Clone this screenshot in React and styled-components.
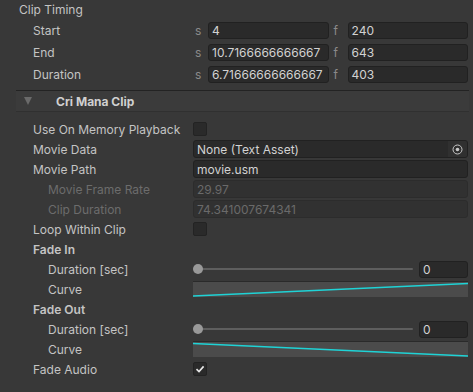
import React from 'react';
import styled, { createGlobalStyle } from 'styled-components';

const GlobalStyle = createGlobalStyle`
  html, body {
    margin: 0;
    padding: 0;
    background: #383838;
  }
  body {
    font-family: Inter, "Noto Sans", "Liberation Sans", sans-serif;
    font-size: 12px;
    color: #c4c4c4;
  }
`;

const Panel = styled.div`
  width: 473px;
  height: 392px;
  background: #383838;
  overflow: hidden;
  display: flex;
  flex-direction: column;
`;

const Title = styled.div`
  height: 19px;
  padding-left: 19px;
  display: flex;
  align-items: center;
`;

const Row = styled.div`
  height: ${(p) => p.h || 20}px;
  display: grid;
  grid-template-columns: 193px 1fr;
  align-items: center;
  padding-right: 5px;
`;

const Label = styled.div`
  padding-left: ${(p) => (p.indent ? 48 : 33)}px;
  font-weight: ${(p) => (p.bold ? 600 : 400)};
  color: ${(p) => (p.disabled ? '#6c6c6c' : '#c4c4c4')};
  white-space: nowrap;
`;

const TimingValue = styled.div`
  display: grid;
  grid-template-columns: 15px 1fr 19px 1fr;
  align-items: center;
`;

const Unit = styled.span`
  color: #8a8a8a;
  padding-left: ${(p) => p.pad || 2}px;
`;

const Field = styled.div`
  height: 17px;
  box-sizing: border-box;
  background: ${(p) => (p.disabled ? '#313131' : '#2a2a2a')};
  border: 1px solid ${(p) => (p.disabled ? '#2c2c2c' : '#212121')};
  border-radius: 3px;
  padding: 0 3px;
  display: flex;
  align-items: center;
  color: ${(p) => (p.disabled ? '#6a6a6a' : '#d2d2d2')};
  white-space: nowrap;
  overflow: hidden;
`;

const ObjectField = styled(Field)`
  height: 18px;
  padding-right: 0;
  justify-content: space-between;
`;

const Picker = styled.div`
  width: 19px;
  height: 100%;
  background: #303030;
  display: flex;
  align-items: center;
  justify-content: center;
`;

const Separator = styled.div`
  height: 5px;
`;

const Header = styled.div`
  margin-left: 16px;
  margin-right: 4px;
  height: 20px;
  border-top: 1px solid #232323;
  border-bottom: 1px solid #303030;
  background: #3b3b3b;
  display: flex;
  align-items: center;
  font-weight: 700;
  color: #d0d0d0;
`;

const Arrow = styled.span`
  width: 0;
  height: 0;
  margin-left: 8px;
  margin-right: 24px;
  border-left: 4.5px solid transparent;
  border-right: 4.5px solid transparent;
  border-top: 8px solid #6a6a6a;
`;

const Gap = styled.div`
  height: 7px;
`;

const Check = styled.div`
  width: 14px;
  height: 14px;
  box-sizing: border-box;
  background: #2a2a2a;
  border: 1px solid #232323;
  border-radius: 2px;
  display: flex;
  align-items: center;
  justify-content: center;
`;

const SliderWrap = styled.div`
  display: grid;
  grid-template-columns: 1fr 49px;
  gap: 6px;
  align-items: center;
`;

const Track = styled.div`
  position: relative;
  height: 2px;
  background: #5e5e5e;
  border-radius: 1px;
`;

const Thumb = styled.div`
  position: absolute;
  left: 0;
  top: -4px;
  width: 10px;
  height: 10px;
  border-radius: 50%;
  background: #999999;
`;

const CurveBox = styled.div`
  height: 16px;
  box-sizing: border-box;
  background: #4b4b4b;
  border-top: 1px solid #2a2a2a;
  overflow: hidden;

  svg {
    display: block;
  }
`;

const Curve = ({ down }) => (
  <CurveBox>
    <svg width="275" height="15" viewBox="0 0 275 15">
      <line
        x1="0"
        y1={down ? 1.5 : 14}
        x2="275"
        y2={down ? 14 : 1.5}
        stroke="#1fd3d6"
        strokeWidth="1.3"
      />
    </svg>
  </CurveBox>
);

const Tick = () => (
  <svg width="10" height="10" viewBox="0 0 10 10">
    <path d="M1.5 5.2 L4 7.6 L8.6 2.4" fill="none" stroke="#e8e8e8" strokeWidth="1.6" />
  </svg>
);

const PickerIcon = () => (
  <svg width="11" height="11" viewBox="0 0 11 11">
    <circle cx="5.5" cy="5.5" r="4.5" fill="none" stroke="#c8c8c8" strokeWidth="1" />
    <circle cx="5.5" cy="5.5" r="1.8" fill="#c8c8c8" />
  </svg>
);

const timing = [
  ['Start', '4', '240'],
  ['End', '10.7166666666667', '643'],
  ['Duration', '6.71666666666667', '403'],
];

const Fade = ({ title, down }) => (
  <>
    <Row>
      <Label bold>{title}</Label>
    </Row>
    <Row>
      <Label indent>Duration [sec]</Label>
      <SliderWrap>
        <Track>
          <Thumb />
        </Track>
        <Field>0</Field>
      </SliderWrap>
    </Row>
    <Row>
      <Label indent>Curve</Label>
      <Curve down={down} />
    </Row>
  </>
);

export default function App() {
  return (
    <Panel>
      <GlobalStyle />
      <Title>Clip Timing</Title>
      {timing.map(([name, sec, frame]) => (
        <Row key={name} h={22}>
          <Label>{name}</Label>
          <TimingValue>
            <Unit>s</Unit>
            <Field>{sec}</Field>
            <Unit pad={5}>f</Unit>
            <Field>{frame}</Field>
          </TimingValue>
        </Row>
      ))}
      <Separator />
      <Header>
        <Arrow />
        Cri Mana Clip
      </Header>
      <Gap />
      <Row>
        <Label>Use On Memory Playback</Label>
        <Check />
      </Row>
      <Row>
        <Label>Movie Data</Label>
        <ObjectField>
          None (Text Asset)
          <Picker>
            <PickerIcon />
          </Picker>
        </ObjectField>
      </Row>
      <Row>
        <Label>Movie Path</Label>
        <ObjectField>movie.usm</ObjectField>
      </Row>
      <Row>
        <Label indent disabled>Movie Frame Rate</Label>
        <ObjectField disabled>29.97</ObjectField>
      </Row>
      <Row>
        <Label indent disabled>Clip Duration</Label>
        <ObjectField disabled>74.341007674341</ObjectField>
      </Row>
      <Row>
        <Label>Loop Within Clip</Label>
        <Check />
      </Row>
      <Fade title="Fade In" />
      <Fade title="Fade Out" down />
      <Row>
        <Label>Fade Audio</Label>
        <Check>
          <Tick />
        </Check>
      </Row>
    </Panel>
  );
}
